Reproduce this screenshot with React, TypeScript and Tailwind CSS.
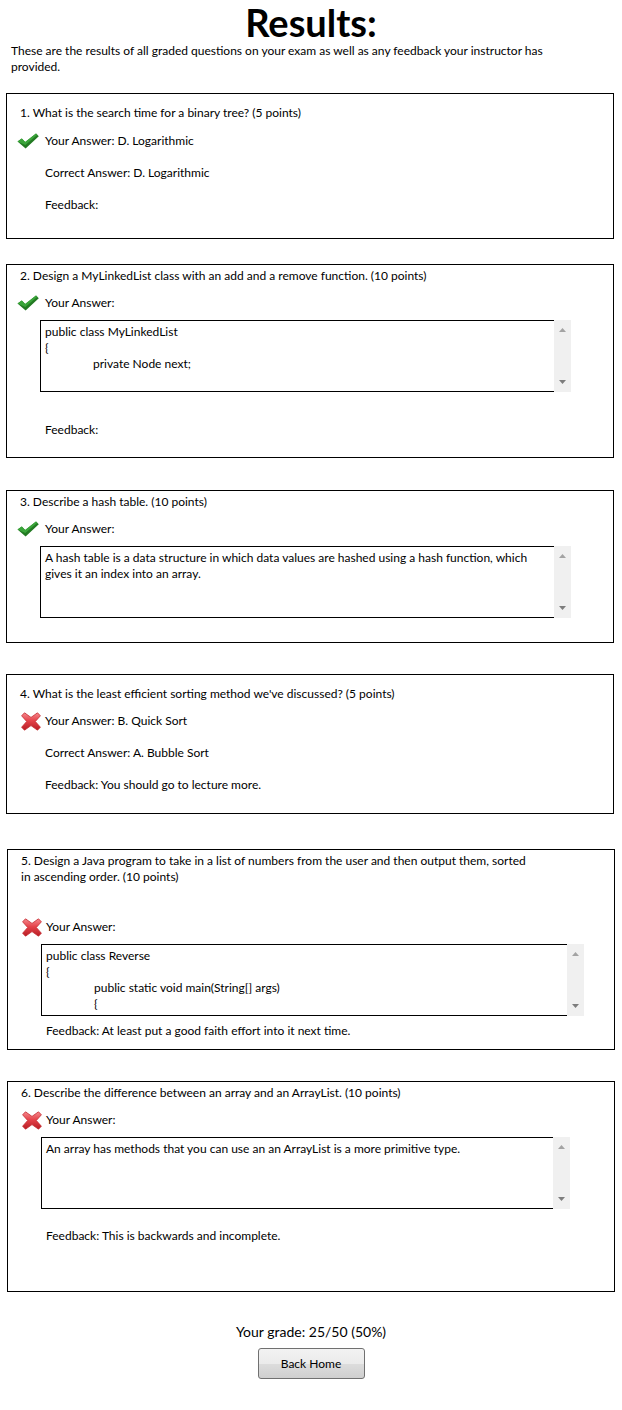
import React from 'react';

const font = { fontFamily: 'Lato, "Open Sans", sans-serif' };

function CheckIcon() {
  return (
    <svg width="22" height="16" viewBox="0 0 22 16" className="shrink-0">
      <path d="M0.5 8.5 L4.8 5.6 L8.2 9 L19 0.5 L21.8 3.2 L8.6 15.6 Z" fill="#237a23" />
      <path d="M0.5 8.5 L4.8 5.6 L8.2 9 L19 0.5 L20.4 1.8 L8.3 12 Z" fill="#3aa53a" />
    </svg>
  );
}

function CrossIcon() {
  return (
    <svg width="20" height="19" viewBox="0 0 20 19" className="shrink-0">
      <defs>
        <linearGradient id="xg" x1="0" y1="0" x2="0" y2="1">
          <stop offset="0" stopColor="#f5898d" />
          <stop offset="0.45" stopColor="#e5434a" />
          <stop offset="1" stopColor="#b71d24" />
        </linearGradient>
      </defs>
      <path
        d="M3.5 0.8 L10 5.4 L16.5 0.8 L19.4 3.8 L14.3 9.5 L19.4 15.2 L16.5 18.2 L10 13.6 L3.5 18.2 L0.6 15.2 L5.7 9.5 L0.6 3.8 Z"
        fill="url(#xg)"
        stroke="#c4282f"
        strokeWidth="0.8"
        strokeLinejoin="round"
      />
    </svg>
  );
}

function Row({ icon, children, className = '' }: { icon?: 'ok' | 'bad'; children: React.ReactNode; className?: string }) {
  if (!icon) {
    return <div className={`h-[16px] leading-[16px] pl-[38px] ${className}`}>{children}</div>;
  }
  return (
    <div className={`h-[16px] leading-[16px] flex items-center ${className}`}>
      {icon === 'ok' ? (
        <div className="ml-[10px] w-[28px] flex"><CheckIcon /></div>
      ) : (
        <div className="ml-[14px] w-[24px] flex"><CrossIcon /></div>
      )}
      <span>{children}</span>
    </div>
  );
}

function CodeBox({ lines, width, className = '' }: { lines: React.ReactNode[]; width: string; className?: string }) {
  return (
    <div className={`flex h-[72px] ml-[33px] ${className}`}>
      <div className={`${width} border-t border-l border-b border-black pl-[4px] pt-[3px] overflow-hidden`}>
        {lines.map((l, i) => (
          <div key={i} className="leading-[16px] h-[16px] whitespace-pre">{l}</div>
        ))}
      </div>
      <div className="w-[17px] bg-[#f0f0f0] flex flex-col items-center justify-between py-[8px]">
        <svg width="7" height="4" viewBox="0 0 7 4"><path d="M3.5 0 L7 4 L0 4 Z" fill="#a3a3a3" /></svg>
        <svg width="7" height="4" viewBox="0 0 7 4"><path d="M0 0 L7 0 L3.5 4 Z" fill="#7d7d7d" /></svg>
      </div>
    </div>
  );
}

const tab = <span className="inline-block w-[48px]" />;

export default function App() {
  return (
    <div className="w-[622px] min-h-[1410px] bg-white text-black text-[12px]" style={font}>
      <h1 className="text-center text-[38px] font-bold leading-[42px] pt-[1px]">Results:</h1>
      <p className="px-[11px] leading-[16px]">
        These are the results of all graded questions on your exam as well as any feedback your instructor has
        <br />
        provided.
      </p>

      {/* 1 */}
      <div className="ml-[6px] w-[608px] h-[146px] border border-black mt-[18px] pt-[11px]">
        <div className="pl-[13px] leading-[16px]">1. What is the search time for a binary tree? (5 points)</div>
        <Row icon="ok" className="mt-[12px]">Your Answer: D. Logarithmic</Row>
        <Row className="mt-[16px]">Correct Answer: D. Logarithmic</Row>
        <Row className="mt-[16px]">Feedback:</Row>
      </div>

      {/* 2 */}
      <div className="ml-[6px] w-[608px] h-[194px] border border-black mt-[25px] pt-[3px]">
        <div className="pl-[13px] leading-[16px]">2. Design a MyLinkedList class with an add and a remove function. (10 points)</div>
        <Row icon="ok" className="mt-[11px]">Your Answer:</Row>
        <CodeBox
          className="mt-[9px]"
          width="w-[514px]"
          lines={['public class MyLinkedList', '{', <>{tab}private Node next;</>]}
        />
        <Row className="mt-[30px]">Feedback:</Row>
      </div>

      {/* 3 */}
      <div className="ml-[6px] w-[608px] h-[153px] border border-black mt-[32px] pt-[3px]">
        <div className="pl-[13px] leading-[16px]">3. Describe a hash table. (10 points)</div>
        <Row icon="ok" className="mt-[11px]">Your Answer:</Row>
        <CodeBox
          className="mt-[9px]"
          width="w-[514px]"
          lines={[
            'A hash table is a data structure in which data values are hashed using a hash function, which',
            'gives it an index into an array.',
          ]}
        />
      </div>

      {/* 4 */}
      <div className="ml-[6px] w-[608px] h-[140px] border border-black mt-[31px] pt-[11px]">
        <div className="pl-[13px] leading-[16px]">4. What is the least efficient sorting method we've discussed? (5 points)</div>
        <Row icon="bad" className="mt-[11px]">Your Answer: B. Quick Sort</Row>
        <Row className="mt-[16px]">Correct Answer: A. Bubble Sort</Row>
        <Row className="mt-[16px]">Feedback: You should go to lecture more.</Row>
      </div>

      {/* 5 */}
      <div className="ml-[7px] w-[608px] h-[201px] border border-black mt-[35px] pt-[3px]">
        <div className="pl-[13px] leading-[16px]">
          5. Design a Java program to take in a list of numbers from the user and then output them, sorted
          <br />
          in ascending order. (10 points)
        </div>
        <Row icon="bad" className="mt-[34px]">Your Answer:</Row>
        <CodeBox
          className="mt-[9px]"
          width="w-[526px]"
          lines={['public class Reverse', '{', <>{tab}public static void main(String[] args)</>, <>{tab}{'{'}</>]}
        />
        <Row className="mt-[7px]">Feedback: At least put a good faith effort into it next time.</Row>
      </div>

      {/* 6 */}
      <div className="ml-[7px] w-[608px] h-[211px] border border-black mt-[31px] pt-[3px]">
        <div className="pl-[13px] leading-[16px]">6. Describe the difference between an array and an ArrayList. (10 points)</div>
        <Row icon="bad" className="mt-[11px]">Your Answer:</Row>
        <CodeBox
          className="mt-[9px]"
          width="w-[512px]"
          lines={['An array has methods that you can use an an ArrayList is a more primitive type.']}
        />
        <Row className="mt-[19px]">Feedback: This is backwards and incomplete.</Row>
      </div>

      <div className="text-center text-[14px] leading-[18px] mt-[31px]">Your grade: 25/50 (50%)</div>
      <div className="flex justify-center mt-[7px]">
        <button className="w-[107px] h-[31px] rounded-[3px] border border-[#707070] bg-[linear-gradient(to_bottom,#f2f2f2_0%,#ebebeb_50%,#dddddd_50%,#cfcfcf_100%)] text-[12px] text-black">
          Back Home
        </button>
      </div>
    </div>
  );
}
